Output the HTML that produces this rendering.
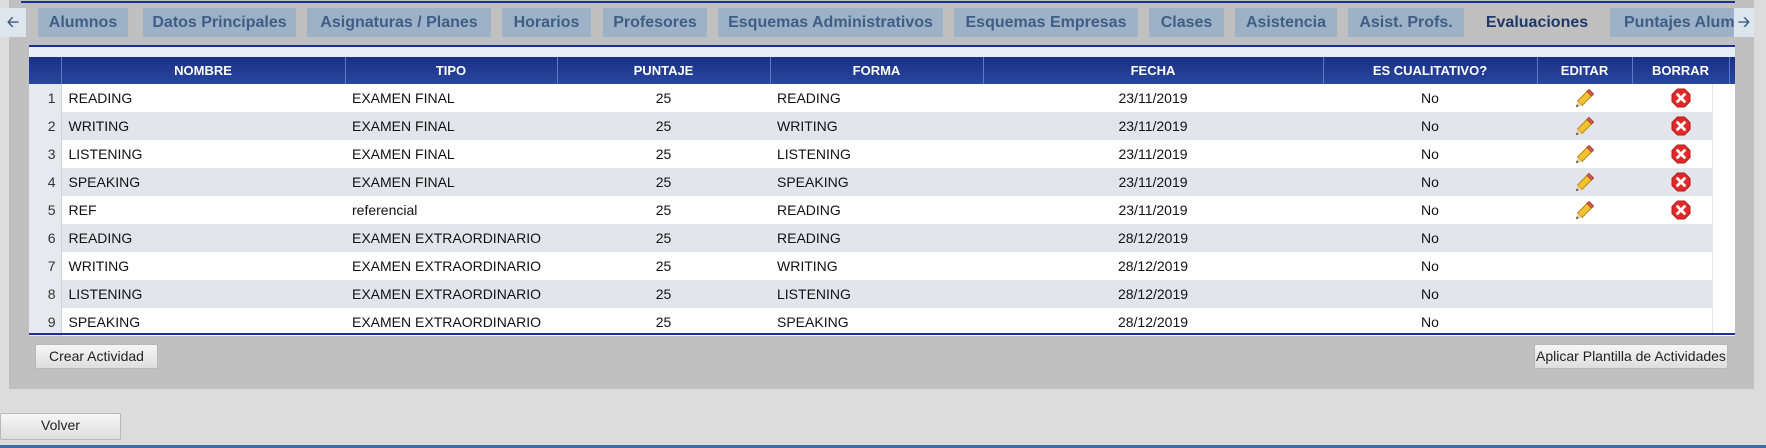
<!DOCTYPE html><html><head><meta charset="utf-8"><style>
*{margin:0;padding:0;box-sizing:border-box}
body{width:1766px;height:448px;background:#dcdcdc;position:relative;overflow:hidden;font-family:"Liberation Sans",Arial,sans-serif}
.panel{position:absolute;left:9px;top:0;width:1745px;height:389px;background:#c0c0c0}
.line{position:absolute;left:29px;width:1706px;height:2px;background:#1f2f9a}
.tab{position:absolute;top:8px;height:29px;background:#9db2c6;color:#3f5d86;font-weight:bold;font-size:16px;line-height:29px;text-align:center;white-space:nowrap;overflow:hidden}
.tab.act{background:#c0c0c0;color:#1f3866}
.arr{position:absolute;top:8px;height:29px;background:#dde5ee;color:#3f5d86;font-size:15px;line-height:29px;text-align:center;font-weight:bold}
table{position:absolute;left:29px;top:57px;border-collapse:collapse;font-size:14px;color:#111}
th{background:linear-gradient(#1a2f86,#28479f);color:#fff;font-size:13px;height:27px;border-right:1px solid #5a7cc4;font-weight:bold}
td{height:28px;padding:0 7px}
tr.o td{background:#fff}
tr.e td{background:#e2e6ec}
td.n{background:#e6e9ee!important;text-align:right;padding-right:5px;color:#333;border-right:1px solid #d0d4da}
.c{text-align:center}
.btn{position:absolute;height:25px;background:linear-gradient(#f6f6f6,#dedede);border:1px solid #b8b8b8;border-radius:2px;font-size:14px;color:#222;text-align:center;line-height:23px}
</style></head><body>
<div class="panel"></div>
<div class="line" style="top:1px;left:21px;width:1714px"></div>
<div class="arr" style="left:0;width:26px">&#129120;</div>
<div class="tab" style="left:38px;width:90px">Alumnos</div>
<div class="tab" style="left:143px;width:153px">Datos Principales</div>
<div class="tab" style="left:307px;width:184px">Asignaturas / Planes</div>
<div class="tab" style="left:502px;width:89px">Horarios</div>
<div class="tab" style="left:603px;width:104px">Profesores</div>
<div class="tab" style="left:718px;width:225px">Esquemas Administrativos</div>
<div class="tab" style="left:954px;width:184px">Esquemas Empresas</div>
<div class="tab" style="left:1149px;width:75px">Clases</div>
<div class="tab" style="left:1235px;width:102px">Asistencia</div>
<div class="tab" style="left:1348px;width:116px">Asist. Profs.</div>
<div class="tab act" style="left:1475px;width:124px">Evaluaciones</div>
<div class="tab" style="left:1610px;width:125px;text-align:left;padding-left:14px">Puntajes Alumnos</div>
<div class="arr" style="left:1734px;width:20px">&#129122;</div>
<div class="line" style="top:45px"></div>
<div style="position:absolute;left:29px;top:47px;width:1706px;height:10px;background:#e8eef6"></div>
<div style="position:absolute;left:29px;top:57px;width:1706px;height:277px;background:#fff"></div>
<table>
<tr><th style="width:32px"></th><th style="width:284px">NOMBRE</th><th style="width:212px">TIPO</th><th style="width:213px">PUNTAJE</th><th style="width:213px">FORMA</th><th style="width:340px">FECHA</th><th style="width:214px">ES CUALITATIVO?</th><th style="width:95px">EDITAR</th><th style="width:97px">BORRAR</th><th style="width:6px;border:none"></th></tr>
<tbody id="b"></tbody>
</table>
<div style="position:absolute;left:1712px;top:84px;width:23px;height:249px;background:#fff;border-left:1px solid #e4e4e4"></div>
<div class="line" style="top:333px"></div>
<div class="btn" style="left:35px;top:344px;width:123px">Crear Actividad</div>
<div class="btn" style="left:1534px;top:344px;width:194px">Aplicar Plantilla de Actividades</div>
<div class="btn" style="left:0;top:413px;width:121px;height:27px">Volver</div>
<div style="position:absolute;left:0;top:445px;width:1766px;height:3px;background:#3a6ea5"></div>
<script>
var r=[["READING","EXAMEN FINAL","READING","23/11/2019",1],["WRITING","EXAMEN FINAL","WRITING","23/11/2019",1],["LISTENING","EXAMEN FINAL","LISTENING","23/11/2019",1],["SPEAKING","EXAMEN FINAL","SPEAKING","23/11/2019",1],["REF","referencial","READING","23/11/2019",1],["READING","EXAMEN EXTRAORDINARIO","READING","28/12/2019",0],["WRITING","EXAMEN EXTRAORDINARIO","WRITING","28/12/2019",0],["LISTENING","EXAMEN EXTRAORDINARIO","LISTENING","28/12/2019",0],["SPEAKING","EXAMEN EXTRAORDINARIO","SPEAKING","28/12/2019",0]];
var pen='<svg width="20" height="20" viewBox="0 0 20 20" style="vertical-align:middle"><path d="M14 1.5l4.5 4.5L7 17.5 2.5 13z" fill="#f2c230" stroke="#b88a10" stroke-width="1"/><path d="M14 1.5l4.5 4.5-2 2L12 3.5z" fill="#d65a5a" stroke="#a33" stroke-width=".8"/><path d="M2.5 13L7 17.5 1 19z" fill="#ead2a4"/><path d="M1 19l.8-2.6 1.8 1.8z" fill="#333"/></svg>';
var x='<svg width="20" height="20" viewBox="0 0 20 20" style="vertical-align:middle"><path d="M6.5 1h7l5.5 5.5v7L13.5 19h-7L1 13.5v-7z" fill="#e02a2a" stroke="#b51a1a"/><path d="M6.5 6.5l7 7M13.5 6.5l-7 7" stroke="#fff" stroke-width="2.8" stroke-linecap="round"/></svg>';
var h='';r.forEach(function(a,i){h+='<tr class="'+(i%2?'e':'o')+'"><td class="n">'+(i+1)+'</td><td>'+a[0]+'</td><td>'+a[1]+'</td><td class="c">25</td><td>'+a[2]+'</td><td class="c">'+a[3]+'</td><td class="c">No</td><td class="c">'+(a[4]?pen:'')+'</td><td class="c">'+(a[4]?x:'')+'</td><td style="background:#fff;padding:0"></td></tr>'});
document.getElementById('b').innerHTML=h;
</script>
</body></html>
